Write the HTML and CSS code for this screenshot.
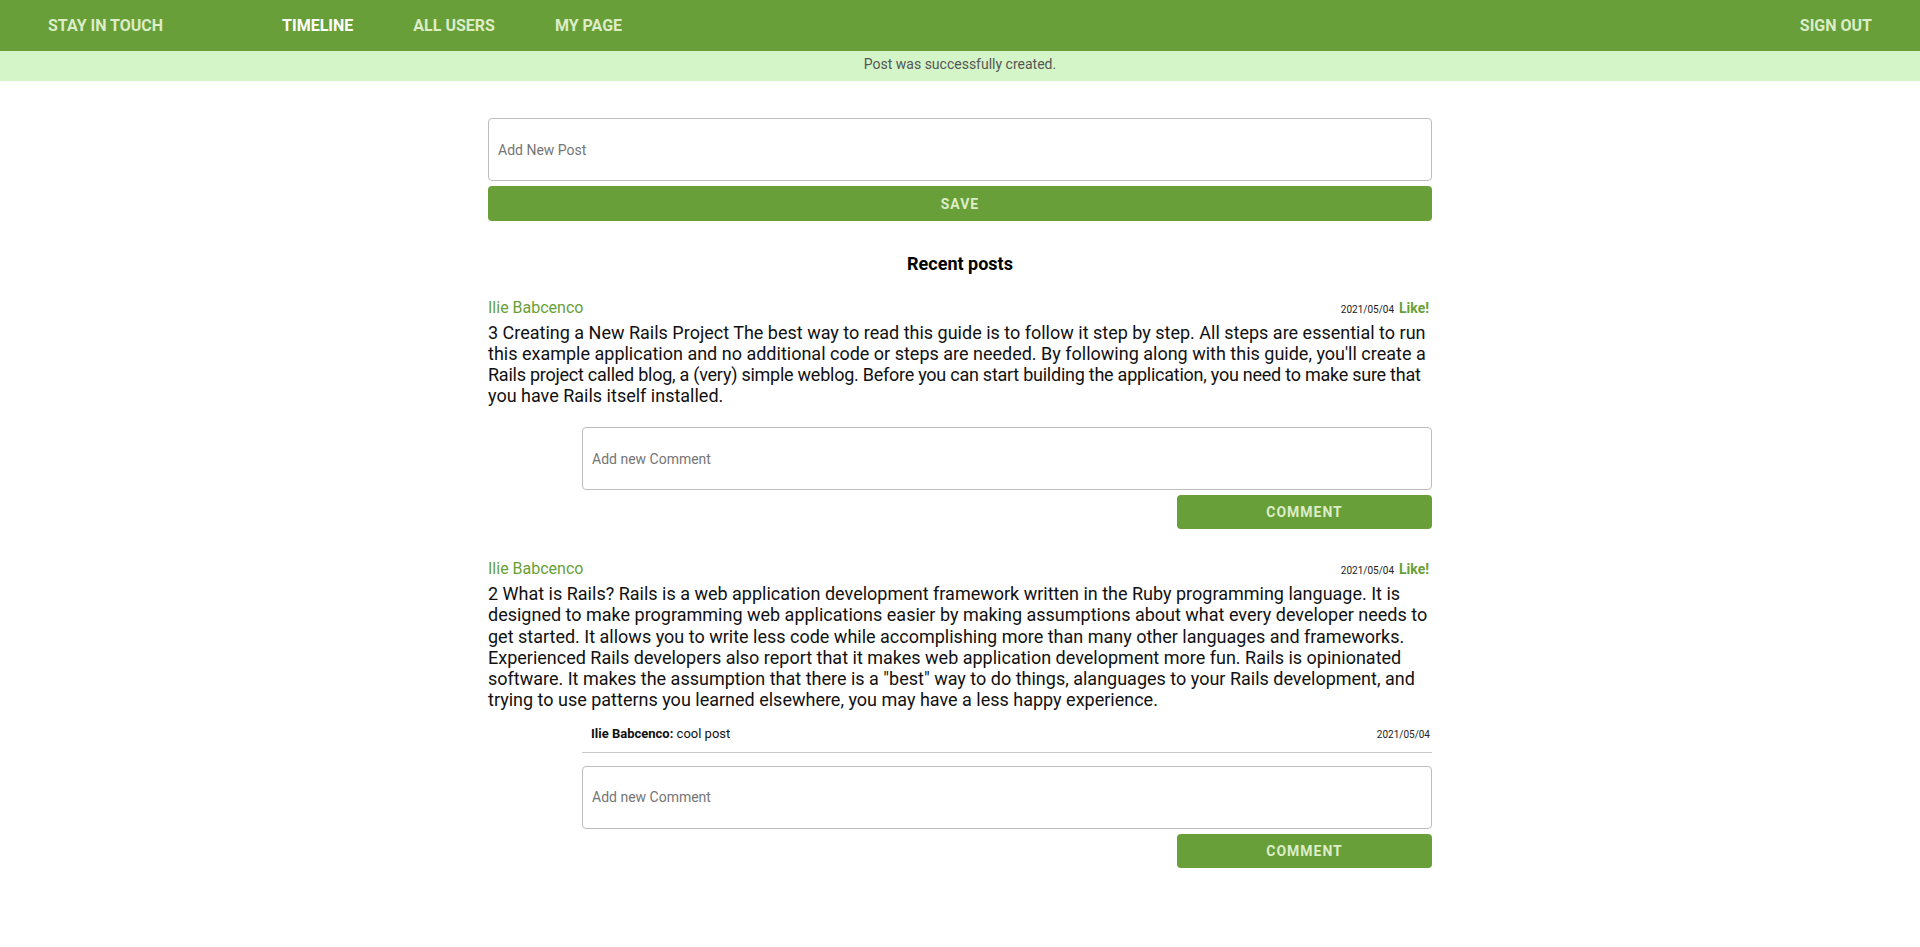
FILE: index.html
```html
<!DOCTYPE html>
<html lang="en">
<head>
<meta charset="utf-8">
<title>Stay in touch</title>
<link rel="stylesheet" href="styles.css">
</head>
<body>
<header class="nav">
  <a class="brand" href="#">STAY IN TOUCH</a>
  <nav class="links">
    <a class="link active" href="#">TIMELINE</a>
    <a class="link" href="#">ALL USERS</a>
    <a class="link" href="#">MY PAGE</a>
  </nav>
  <a class="link signout" href="#">SIGN OUT</a>
</header>
<div class="flash">Post was successfully created.</div>
<main class="container">
  <form class="post-form">
    <input class="field" type="text" placeholder="Add New Post">
    <button class="btn btn-full" type="button">SAVE</button>
  </form>
  <h2 class="section-title">Recent posts</h2>

  <article class="post">
    <div class="post-head">
      <span class="author">Ilie Babcenco</span>
      <span class="meta"><span class="date">2021/05/04</span><a class="like" href="#">Like!</a></span>
    </div>
    <p class="post-body">3 Creating a New Rails Project The best way to read this guide is to follow it step by step. All steps are essential to run this example application and no additional code or steps are needed. By following along with this guide, you'll create a <span class="tight">Rails project called blog, a (very) simple weblog. Before you can start building the application, you need to make sure that</span> you have Rails itself installed.</p>
    <form class="comment-form">
      <input class="field" type="text" placeholder="Add new Comment">
      <button class="btn btn-comment" type="button">COMMENT</button>
    </form>
  </article>

  <article class="post">
    <div class="post-head">
      <span class="author">Ilie Babcenco</span>
      <span class="meta"><span class="date">2021/05/04</span><a class="like" href="#">Like!</a></span>
    </div>
    <p class="post-body">2 What is Rails? Rails is a web application development framework written in the Ruby programming language. It is designed to make programming web applications easier by making assumptions about what every developer needs to get started. It allows you to write less code while accomplishing more than many other languages and frameworks. Experienced Rails developers also report that it makes web application development more fun. Rails is opinionated software. It makes the assumption that there is a "best" way to do things, alanguages to your Rails development, and trying to use patterns you learned elsewhere, you may have a less happy experience.</p>
    <ul class="comments">
      <li class="comment">
        <span class="comment-text"><b>Ilie Babcenco:</b> cool post</span>
        <span class="date">2021/05/04</span>
      </li>
    </ul>
    <form class="comment-form">
      <input class="field" type="text" placeholder="Add new Comment">
      <button class="btn btn-comment" type="button">COMMENT</button>
    </form>
  </article>
</main>
</body>
</html>
```
FILE: styles.css
```css
* { box-sizing: border-box; }
html, body { margin: 0; padding: 0; }
body {
  font-family: Roboto, "Liberation Sans", Arial, sans-serif;
  color: #111;
  background: #fff;
}
a { text-decoration: none; }

.nav {
  height: 51px;
  background: #689f38;
  display: flex;
  align-items: center;
  padding: 0 48px;
}
.brand, .link {
  font-size: 16px;
  font-weight: 700;
  color: #dcedc8;
}
.brand { margin-right: 119px; }
.links { display: flex; gap: 60px; }
.link.active { color: #ffffff; }
.signout { margin-left: auto; }

.flash {
  height: 30px;
  background: #d4f5c7;
  color: #555;
  font-size: 14px;
  line-height: 26px;
  text-align: center;
}

.container {
  width: 944px;
  margin: 0 auto;
  padding: 37px 0 60px;
}

.field {
  display: block;
  width: 100%;
  height: 63px;
  border: 1px solid #bdbdbd;
  border-radius: 4px;
  padding: 0 9px;
  font-family: inherit;
  font-size: 14px;
  color: #333;
  background: #fff;
  outline: none;
}
.field::placeholder { color: #757575; }

.btn {
  display: block;
  border: none;
  border-radius: 4px;
  background: #689f38;
  color: #dcedc8;
  font-family: inherit;
  font-size: 14px;
  font-weight: 700;
  letter-spacing: 1px;
  cursor: pointer;
}
.btn-full { width: 100%; height: 35px; margin-top: 5px; }

.section-title {
  margin: 32px 0 24px;
  font-size: 18px;
  font-weight: 700;
  text-align: center;
  line-height: 21px;
  color: #000;
}

.post { margin-bottom: 30px; }
.post-head {
  display: flex;
  justify-content: space-between;
  align-items: baseline;
  height: 20px;
  margin-bottom: 4px;
}
.author { font-size: 16px; color: #689f38; line-height: 20px; }
.meta { padding-right: 3px; }
.date { font-size: 10px; color: #222; }
.like {
  font-size: 14px;
  font-weight: 700;
  color: #689f38;
  margin-left: 5px;
}
.post-body {
  margin: 0;
  font-size: 18px;
  line-height: 21.1px;
  color: #111;
}
.tight { letter-spacing: -0.25px; }

.comments {
  list-style: none;
  margin: 11px 0 0 94px;
  padding: 0;
}
.comment {
  display: flex;
  justify-content: space-between;
  align-items: baseline;
  padding: 6px 2px 10px 9px;
  border-bottom: 1px solid #c8c8c8;
  font-size: 13px;
  line-height: 14px;
  color: #111;
}
.comment .date { font-size: 10px; }

.comment-form {
  margin: 21px 0 0 94px;
  display: flex;
  flex-direction: column;
  align-items: flex-end;
}
.comments + .comment-form { margin-top: 13px; }
.btn-comment { width: 255px; height: 34px; margin-top: 5px; }
```
